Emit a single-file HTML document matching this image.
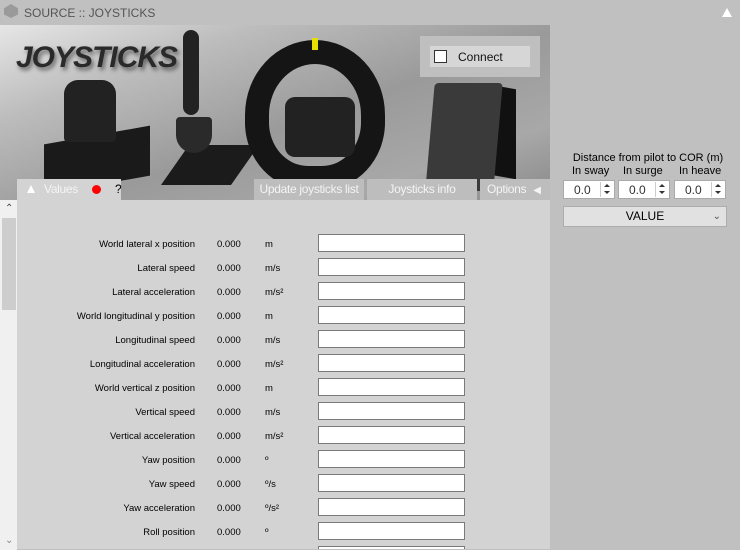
<!DOCTYPE html>
<html style="overflow:hidden;width:740px;height:550px"><head><meta charset="utf-8"><style>
*{margin:0;padding:0;box-sizing:border-box}
body{width:740px;height:550px;background:#c0c0c0;font-family:"Liberation Sans",sans-serif;position:relative;overflow:hidden;font-size:11px;color:#000}
.a{position:absolute}
#banner{left:0;top:25px;width:550px;height:175px;background:linear-gradient(160deg,#e6e6e6 0%,#bdbdbd 25%,#9a9a9a 55%,#a8a8a8 80%,#8a8a8a 100%);overflow:hidden}
.tab{position:absolute;top:179px;height:21px;background:#bdbdbd;color:#f4f4f4;font-size:12px;line-height:21px;text-align:center;letter-spacing:-0.3px}
.row{position:absolute;left:18px;width:460px;height:24px}
.row .l{position:absolute;right:283px;top:5px;font-size:9.5px;white-space:nowrap}
.row .v{position:absolute;left:199px;top:5px;font-size:9.5px}
.row .u{position:absolute;left:247px;top:5px;font-size:9.5px}
.row .i{position:absolute;left:300px;top:0;width:147px;height:18px;background:#fff;border:1px solid #7a7a7a}
.spin{position:absolute;top:180px;width:52px;height:19px;background:#fff;border:1px solid #aaa;font-size:12px;color:#333}
.spin span{position:absolute;left:10px;top:2px}
.spin i{position:absolute;right:1px;top:1px;width:13px;height:15px;border-left:1px solid #ccc;font-style:normal}
.spin i:before{content:"";position:absolute;left:3px;top:2px;border:3px solid transparent;border-bottom:3px solid #333;border-top:0}
.spin i:after{content:"";position:absolute;left:3px;top:9px;border:3px solid transparent;border-top:3px solid #333;border-bottom:0}
</style></head><body>
<div class="a" style="left:4px;top:4px;width:14px;height:14px;background:#9a9a9a;clip-path:polygon(50% 0,100% 30%,100% 75%,50% 100%,0 75%,0 30%)"></div>
<div class="a" style="left:24px;top:6px;font-size:12px;color:#555">SOURCE :: JOYSTICKS</div>
<div class="a" style="left:722px;top:8px;border:5px solid transparent;border-bottom:9px solid #fff;border-top:0"></div>

<div id="banner" class="a">
  <div class="a" style="left:16px;top:16px;font-size:30px;font-weight:bold;font-style:italic;color:#2a2a2a;letter-spacing:-1px;text-shadow:2px 3px 4px rgba(0,0,0,.5)">JOYSTICKS</div>
  <!-- throttle -->
  <div class="a" style="left:44px;top:110px;width:106px;height:50px;background:#1a1a1a;transform:skewY(-10deg)"></div>
  <div class="a" style="left:64px;top:55px;width:52px;height:62px;background:#222;border-radius:14px 14px 4px 4px"></div>
  <!-- joystick -->
  <div class="a" style="left:175px;top:120px;width:70px;height:40px;background:#1b1b1b;transform:skewX(-35deg)"></div>
  <div class="a" style="left:176px;top:92px;width:36px;height:36px;background:#2a2a2a;border-radius:4px 4px 18px 18px"></div>
  <div class="a" style="left:183px;top:5px;width:16px;height:85px;background:#222;border-radius:8px"></div>
  <!-- wheel -->
  <div class="a" style="left:245px;top:15px;width:140px;height:150px;border:24px solid #151515;border-radius:50% 50% 45% 45%"></div>
  <div class="a" style="left:285px;top:72px;width:70px;height:60px;background:#222;border-radius:10px"></div>
  <div class="a" style="left:312px;top:13px;width:6px;height:12px;background:#e8e000"></div>
  <!-- panel -->
  <div class="a" style="left:490px;top:62px;width:26px;height:90px;background:#111;transform:skewY(10deg)"></div>
  <div class="a" style="left:430px;top:58px;width:68px;height:108px;background:#3a3a3a;border-radius:4px;transform:skewX(-5deg)"></div>
  <!-- connect -->
  <div class="a" style="left:420px;top:11px;width:120px;height:41px;background:#bfbfbf"></div>
  <div class="a" style="left:430px;top:21px;width:100px;height:21px;background:#d6d6d6"></div>
  <div class="a" style="left:434px;top:25px;width:13px;height:13px;background:#fff;border:1px solid #333"></div>
  <div class="a" style="left:458px;top:25px;font-size:12px;color:#111">Connect</div>
</div>

<div class="tab" style="left:17px;width:104px;background:#d3d3d3;text-align:left"><span class="a" style="left:10px;top:6px;border:4px solid transparent;border-bottom:8px solid #fff;border-top:0"></span><span class="a" style="left:27px;top:0">Values</span><span class="a" style="left:75px;top:6px;width:9px;height:9px;border-radius:50%;background:#f00"></span><span class="a" style="left:98px;top:0;color:#000">?</span></div>
<div class="tab" style="left:254px;width:110px">Update joysticks list</div>
<div class="tab" style="left:367px;width:110px">Joysticks info</div>
<div class="tab" style="left:480px;width:70px;text-align:left;padding-left:7px">Options <span style="font-size:10px;margin-left:4px">◀</span></div>

<div class="a" style="left:17px;top:200px;width:533px;height:349px;background:#d3d3d3;overflow:hidden">
<div style="position:relative;left:-17px;top:-200px">
<div class="row" style="top:234px"><span class="l">World lateral x position</span><span class="v">0.000</span><span class="u">m</span><span class="i"></span></div>
<div class="row" style="top:258px"><span class="l">Lateral speed</span><span class="v">0.000</span><span class="u">m/s</span><span class="i"></span></div>
<div class="row" style="top:282px"><span class="l">Lateral acceleration</span><span class="v">0.000</span><span class="u">m/s²</span><span class="i"></span></div>
<div class="row" style="top:306px"><span class="l">World longitudinal y position</span><span class="v">0.000</span><span class="u">m</span><span class="i"></span></div>
<div class="row" style="top:330px"><span class="l">Longitudinal speed</span><span class="v">0.000</span><span class="u">m/s</span><span class="i"></span></div>
<div class="row" style="top:354px"><span class="l">Longitudinal acceleration</span><span class="v">0.000</span><span class="u">m/s²</span><span class="i"></span></div>
<div class="row" style="top:378px"><span class="l">World vertical z position</span><span class="v">0.000</span><span class="u">m</span><span class="i"></span></div>
<div class="row" style="top:402px"><span class="l">Vertical speed</span><span class="v">0.000</span><span class="u">m/s</span><span class="i"></span></div>
<div class="row" style="top:426px"><span class="l">Vertical acceleration</span><span class="v">0.000</span><span class="u">m/s²</span><span class="i"></span></div>
<div class="row" style="top:450px"><span class="l">Yaw position</span><span class="v">0.000</span><span class="u">º</span><span class="i"></span></div>
<div class="row" style="top:474px"><span class="l">Yaw speed</span><span class="v">0.000</span><span class="u">º/s</span><span class="i"></span></div>
<div class="row" style="top:498px"><span class="l">Yaw acceleration</span><span class="v">0.000</span><span class="u">º/s²</span><span class="i"></span></div>
<div class="row" style="top:522px"><span class="l">Roll position</span><span class="v">0.000</span><span class="u">º</span><span class="i"></span></div>
<div class="row" style="top:546px"><span class="i"></span></div>
</div></div>
<div class="a" style="left:0;top:200px;width:17px;height:350px;background:#f0f0f0"></div>
<div class="a" style="left:2px;top:218px;width:14px;height:92px;background:#cdcdcd"></div>
<div class="a" style="left:5px;top:203px;font-size:10px;color:#444">&#8963;</div>
<div class="a" style="left:5px;top:535px;font-size:10px;color:#888">&#8964;</div>

<div class="a" style="left:563px;top:152px;width:170px;text-align:center;font-size:11px">Distance from pilot to COR (m)</div>
<div class="a" style="left:572px;top:165px;font-size:11px">In sway</div>
<div class="a" style="left:623px;top:165px;font-size:11px">In surge</div>
<div class="a" style="left:679px;top:165px;font-size:11px">In heave</div>
<div class="spin" style="left:563px"><span>0.0</span><i></i></div>
<div class="spin" style="left:618px"><span>0.0</span><i></i></div>
<div class="spin" style="left:674px"><span>0.0</span><i></i></div>
<div class="a" style="left:563px;top:206px;width:164px;height:21px;background:#e1e1e1;border:1px solid #adadad;font-size:12px;line-height:19px;text-align:center">VALUE<span class="a" style="right:5px;top:0;font-size:10px;color:#555">&#8964;</span></div>
</body></html>
